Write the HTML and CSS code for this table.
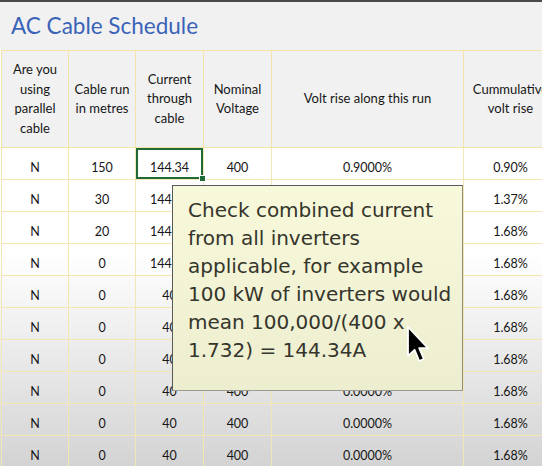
FILE: index.html
```html
<!DOCTYPE html>
<html>
<head>
<meta charset="utf-8">
<link rel="stylesheet" href="styles.css">
</head>
<body>
<div class="page">
  <div class="title">AC Cable Schedule</div>
  <table class="sheet">
    <colgroup>
      <col class="c1"><col class="c2"><col class="c3"><col class="c4"><col class="c5"><col class="c6">
    </colgroup>
    <thead>
      <tr>
        <th>Are you<br>using<br>parallel<br>cable</th>
        <th>Cable run<br>in metres</th>
        <th>Current<br>through<br>cable</th>
        <th>Nominal<br>Voltage</th>
        <th>Volt rise along this run</th>
        <th>Cummulative<br>volt rise</th>
      </tr>
    </thead>
    <tbody>
      <tr><td>N</td><td>150</td><td class="sel">144.34<span class="handle"></span></td><td>400</td><td>0.9000%</td><td>0.90%</td></tr>
      <tr><td>N</td><td>30</td><td>144.34</td><td>400</td><td>0.4700%</td><td>1.37%</td></tr>
      <tr><td>N</td><td>20</td><td>144.34</td><td>400</td><td>0.3100%</td><td>1.68%</td></tr>
      <tr><td>N</td><td>0</td><td>144.34</td><td>400</td><td>0.0000%</td><td>1.68%</td></tr>
      <tr><td>N</td><td>0</td><td>40</td><td>400</td><td>0.0000%</td><td>1.68%</td></tr>
      <tr><td>N</td><td>0</td><td>40</td><td>400</td><td>0.0000%</td><td>1.68%</td></tr>
      <tr><td>N</td><td>0</td><td>40</td><td>400</td><td>0.0000%</td><td>1.68%</td></tr>
      <tr><td>N</td><td>0</td><td>40</td><td>400</td><td>0.0000%</td><td>1.68%</td></tr>
      <tr><td>N</td><td>0</td><td>40</td><td>400</td><td>0.0000%</td><td>1.68%</td></tr>
      <tr><td>N</td><td>0</td><td>40</td><td>400</td><td>0.0000%</td><td>1.68%</td></tr>
    </tbody>
  </table>
  <div class="comment">Check combined current from all inverters applicable, for example 100 kW of inverters would mean 100,000/(400 x 1.732) = 144.34A</div>
  <svg class="cursor" width="26" height="40" viewBox="0 0 13 20">
    <path d="M1 1 L1 15.5 L4.3 12.4 L6.6 18 L8.9 17 L6.6 11.6 L11 11.6 Z" fill="#000" stroke="#fff" stroke-width="0.9" stroke-linejoin="round"/>
  </svg>
</div>
</body>
</html>
```
FILE: styles.css
```css
html, body {
  margin: 0;
  padding: 0;
}
body {
  background: #ffffff;
}
.page {
  position: relative;
  width: 542px;
  height: 466px;
  overflow: hidden;
  border-top: 2px solid #4a4a4a;
  box-sizing: border-box;
  background: linear-gradient(to bottom, #ffffff 0px, #ffffff 250px, #d3d3d3 466px);
  font-family: Lato, "Liberation Sans", sans-serif;
  color: #161616;
}
.title {
  height: 48px;
  background: #f1f1f1;
  color: #3a63b8;
  font-family: Lato, "Liberation Sans", sans-serif;
  font-size: 22.5px;
  line-height: 48px;
  padding-left: 11px;
  box-sizing: border-box;
}
.sheet {
  border-collapse: collapse;
  table-layout: fixed;
  width: 556px;
  margin-left: 1px;
  font-size: 12.5px;
}
.c1 { width: 67px; }
.c2 { width: 67px; }
.c3 { width: 68px; }
.c4 { width: 68px; }
.c5 { width: 192px; }
.c6 { width: 94px; }
.sheet th {
  height: 96px;
  background: #f1f1f1;
  font-weight: normal;
  font-size: 13px;
  line-height: 19.5px;
  border: 1px solid #f4e3a6;
  padding: 0;
  text-align: center;
  vertical-align: middle;
  white-space: nowrap;
}
.sheet td {
  height: 32px;
  padding: 7px 0 0;
  box-sizing: border-box;
  text-align: center;
  vertical-align: middle;
  border: 1px solid #f4e6b4;
}
.sheet td.sel {
  position: relative;
  box-shadow: inset 0 0 0 2px #1f6a36;
}
.handle {
  position: absolute;
  right: -3px;
  bottom: -3px;
  width: 5px;
  height: 5px;
  background: #1f6a36;
  border: 1px solid #ffffff;
}
.comment {
  position: absolute;
  left: 172px;
  top: 183px;
  width: 291px;
  height: 206px;
  box-sizing: border-box;
  padding: 10px 8px 0 15px;
  background: linear-gradient(to bottom, #f8f8da 0%, #ededd0 100%);
  border: 1px solid #5a5a5a;
  border-right-color: #8c8c80;
  border-bottom-color: #9a9a90;
  font-family: "DejaVu Sans", Verdana, sans-serif;
  font-size: 20px;
  line-height: 28px;
  color: #35352c;
}
.cursor {
  position: absolute;
  left: 406px;
  top: 323px;
}
```
